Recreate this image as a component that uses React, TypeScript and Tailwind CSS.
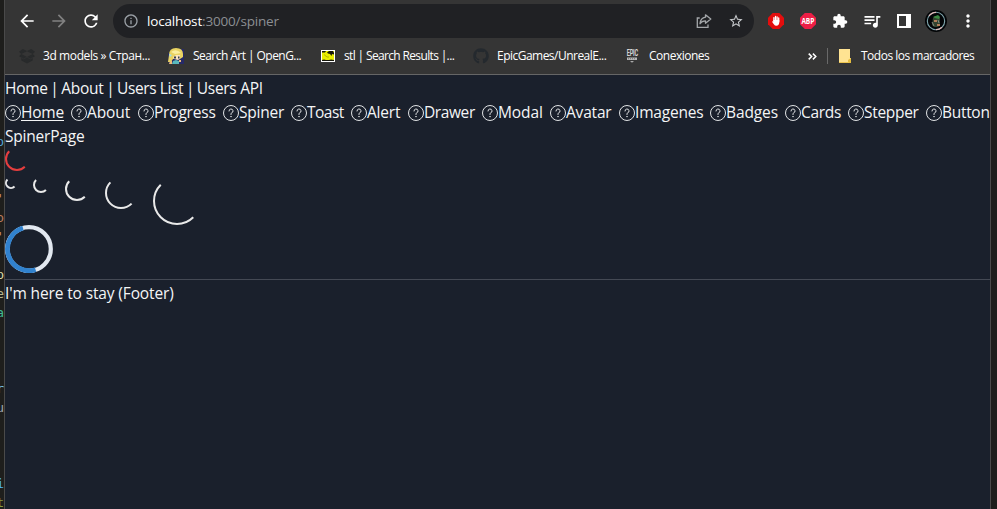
import React from "react";
import { MdArrowBack, MdArrowForward, MdRefresh, MdInfoOutline, MdStarBorder, MdExtension, MdQueueMusic, MdMoreVert } from "react-icons/md";
import { FaGithub } from "react-icons/fa";

const editorLines = [
  { ch: "p", c: "text-[#4fa3d8]" }, { ch: "", c: "" }, { ch: "", c: "" }, { ch: "'", c: "text-[#ce9178]" },
  { ch: "o", c: "text-[#b87a5f]" }, { ch: "'", c: "text-[#ce9178]" }, { ch: "", c: "" }, { ch: "p", c: "text-[#dcdcaa]" },
  { ch: "e", c: "text-[#b5b58e]" }, { ch: "a", c: "text-[#3fb894]" }, { ch: "", c: "" }, { ch: "", c: "" },
  { ch: "", c: "" }, { ch: "r", c: "text-[#7cc4ee]" }, { ch: "u", c: "text-[#9aa5ae]" }, { ch: "", c: "" },
  { ch: "", c: "" }, { ch: "", c: "" }, { ch: "i", c: "text-[#4fb4f8]" }, { ch: "t", c: "text-[#8a9a3e]" },
];

const navItems = [
  { label: "Home", w: "w-[66px]", t: "tracking-[-0.2px]", active: true },
  { label: "About", w: "w-[67px]", t: "tracking-[-0.1px]" },
  { label: "Progress", w: "w-[85px]", t: "tracking-[-0.2px]" },
  { label: "Spiner", w: "w-[68px]", t: "tracking-[-0.2px]" },
  { label: "Toast", w: "w-[60px]", t: "tracking-[-0.5px]" },
  { label: "Alert", w: "w-[57px]", t: "tracking-[-0.2px]" },
  { label: "Drawer", w: "w-[74px]", t: "tracking-[-0.4px]" },
  { label: "Modal", w: "w-[68px]", t: "tracking-[-0.1px]" },
  { label: "Avatar", w: "w-[69px]", t: "tracking-[-0.2px]" },
  { label: "Imagenes", w: "w-[91px]", t: "tracking-[-0.2px]" },
  { label: "Badges", w: "w-[75px]", t: "tracking-[-0.1px]" },
  { label: "Cards", w: "w-[63px]", t: "tracking-[-0.3px]" },
  { label: "Stepper", w: "w-[78px]", t: "tracking-[-0.3px]" },
  { label: "Button", w: "w-[64px]", t: "tracking-[-0.3px]" },
];

function QuestionIcon() {
  return (
    <svg viewBox="0 0 24 24" className="mt-[6px] size-4 shrink-0 text-[#e2e4e6]">
      <g stroke="currentColor" strokeWidth="1.5">
        <path strokeLinecap="round" fill="none" d="M9,9a3,3,0,1,1,4,2.829,1.5,1.5,0,0,0-1,1.415V14.25" />
        <path fill="currentColor" strokeLinecap="round" d="M12,17.25a.375.375,0,1,0,.375.375A.375.375,0,0,0,12,17.25h0" />
        <circle fill="none" strokeMiterlimit="10" cx="12" cy="12" r="11.25" />
      </g>
    </svg>
  );
}

function Spinner({ size, className }: { size: number; className: string }) {
  const c = size / 2;
  const r = c - 1;
  const k = r * Math.SQRT1_2;
  return (
    <svg width={size} height={size} viewBox={`0 0 ${size} ${size}`} className={"block shrink-0 " + className}>
      <path d={`M${c - k} ${c - k}A${r} ${r} 0 0 0 ${c + k} ${c + k}`} fill="none" stroke="currentColor" strokeWidth="2" />
    </svg>
  );
}

function ShareIcon() {
  return (
    <svg viewBox="0 0 16 16" className="size-4" fill="none" stroke="#a4a7aa" strokeWidth="1.3">
      <path d="M3.7 5H1.3V14.3H12V11.5" />
      <path d="M9.5 1.8L14.8 6L9.5 10.2V7.8C7 7.8 5.2 8.7 4 10.8C4.3 7.2 6.2 4.7 9.5 4.2Z" strokeLinejoin="round" />
    </svg>
  );
}

function AdBlockIcon() {
  return (
    <svg viewBox="0 0 16 16" className="size-4">
      <path d="M4.7 0H11.3L16 4.7V11.3L11.3 16H4.7L0 11.3V4.7Z" fill="#e40d0d" />
      <path d="M5.9 8V4.6M7.5 7.5V3.4M9.1 7.5V3.8M10.7 8.5V5" stroke="#fff" strokeWidth="1.3" strokeLinecap="round" />
      <path d="M5.3 7H11.3V9.8Q10.9 12.8 8.4 12.8Q6.8 12.8 5.8 11.2L4 8.8Q4.4 7.9 5.3 8.7Z" fill="#fff" />
    </svg>
  );
}

function AbpIcon() {
  return (
    <span className="flex size-4 items-center justify-center bg-[#ed1e45] text-white [clip-path:polygon(30%_0,70%_0,100%_30%,100%_70%,70%_100%,30%_100%,0_70%,0_30%)]">
      <span className="scale-x-[0.82] font-['Open_Sans',sans-serif] text-[8px] leading-none font-bold tracking-[-0.1px]">ABP</span>
    </span>
  );
}

function AvatarIcon() {
  return (
    <svg viewBox="0 0 22 22" className="size-[22px]">
      <circle cx="11" cy="11" r="11" fill="#030507" />
      <circle cx="11" cy="11" r="8.7" fill="none" stroke="#7fa6ad" strokeWidth="1.1" />
      <path d="M4 6A8.7 8.7 0 0 1 11 2.3M17 17.3A8.7 8.7 0 0 1 11 19.7" fill="none" stroke="#e1b9b8" strokeWidth="1.2" />
      <path d="M7 15L8 8L10 6H14L15 9V15L13 17H9Z" fill="#33432f" />
      <path d="M8 7L13 5L15 7L14 9L10 8Z" fill="#3c8b42" />
      <path d="M9 10H12V12H9ZM12 14H15V16H12Z" fill="#b27d59" />
      <path d="M7 12L9 16M13 10L14 13" stroke="#9aa49a" strokeWidth=".8" />
    </svg>
  );
}

function BoxIcon() {
  return (
    <svg viewBox="0 0 16 16" className="size-4" fill="#282a2b">
      <path d="M3.8 1L8 3L12.2 1L16 3.7L13.7 6L16 8.3L13.7 9.6V12.4L8 15.5L2.3 12.4V9.6L0 8.3L2.3 6L0 3.7Z" />
      <path d="M2.3 6L8 3.2L13.7 6L8 8.9Z" fill="#353535" />
      <path d="M2.3 9.7L4.8 11L8 9L11.2 11L13.7 9.7" stroke="#353535" strokeWidth=".6" fill="none" />
    </svg>
  );
}

function GirlIcon() {
  return (
    <svg viewBox="0 0 16 16" className="size-4">
      <path d="M0 5H5V1H16V16H1Z" fill="#262a67" />
      <path d="M1 7Q1 0 8 0Q15 0 15 6V9L12 11H5L3 14H0Z" fill="#e9d362" />
      <path d="M3 4Q8 0 13 5L7 6Z" fill="#fbefa0" />
      <path d="M5 9L8 7L12 7V11L10 12L6 11Z" fill="#fae3c0" />
      <path d="M6 8.5H8V10.5H6ZM10 8.5H11.5V10.5H10Z" fill="#34404a" />
      <path d="M1 6L4 7L2 9Z" fill="#9de4ed" />
      <path d="M5 13L8 12L11 13V16H4Z" fill="#5ab9bd" />
      <path d="M2 13H4V16H1ZM11 12H13V14H11Z" fill="#efbc7c" />
    </svg>
  );
}

function StlIcon() {
  return (
    <svg viewBox="0 0 14 12" className="h-3 w-[14px]">
      <path d="M0 0H14V12H0Z" fill="#fff" />
      <path d="M1 1H13V11H1Z" fill="#e8ed00" />
      <path d="M1 1H5L4 2.5H1ZM6 2.5L8 1H12L13 3V4.5L11 4L10.5 6L9 4L7 3.5ZM1 10L3 9.5L5 10H8L10 9.5L13 10V11H1Z" fill="#16170a" />
      <path d="M3 4.5L6 7H8" stroke="#a3a800" strokeWidth=".8" fill="none" />
    </svg>
  );
}

function EpicIcon() {
  return (
    <span className="flex w-[10px] flex-col items-center">
      <span className="scale-x-[0.66] font-['Roboto',sans-serif] text-[8.5px] leading-[7px] font-bold tracking-[-0.4px] text-[#d5d5d5]">EPIC</span>
      <svg viewBox="0 0 10 6" className="h-[6px] w-[10px]">
        <path d="M0 .5H10V3H0Z" fill="#b8b8b8" />
        <path d="M1 1.7H9" stroke="#555" strokeWidth=".7" strokeDasharray="1 1" />
        <path d="M3 4H7L5 5.7Z" fill="#aaa" />
      </svg>
    </span>
  );
}

function Bookmark({ icon, label, className, iconBox }: { icon: React.ReactNode; label: string; className: string; iconBox: string }) {
  return (
    <div className={"flex h-full shrink-0 items-center whitespace-nowrap " + className}>
      <span className={"flex shrink-0 items-center " + iconBox}>{icon}</span>
      <span>{label}</span>
    </div>
  );
}

function Divider() {
  return <span className="mx-[-1px]"> | </span>;
}

export default function App() {
  return (
    <div className="flex h-[509px] w-[997px] overflow-hidden bg-[#1e1e1c] font-['Open_Sans','Noto_Sans',sans-serif] text-white">
      <aside className="w-1 shrink-0 overflow-hidden pt-[132px] font-['DejaVu_Sans_Mono',monospace] text-[13px]">
        {editorLines.map((l, i) => (
          <div key={i} className={"flex h-[19px] items-center justify-end leading-[19px] " + l.c}>{l.ch}</div>
        ))}
      </aside>
      <div className="flex w-[987px] shrink-0 flex-col border-x border-[#4a4a4a] bg-[#1a202c]">
        <header className="h-[75px] shrink-0 border-b border-[#666666] bg-[#353535]">
          <div className="flex h-[38px] items-end">
            <div className="flex h-[34px] w-[108px] shrink-0 items-center gap-3 pl-3">
              <MdArrowBack className="size-5" />
              <MdArrowForward className="size-5 text-[#818181]" />
              <MdRefresh className="size-5" />
            </div>
            <div className="flex h-[34px] w-[641px] shrink-0 items-center rounded-full bg-[#202124] pl-[10px]">
              <MdInfoOutline className="size-4 text-[#9aa0a6]" />
              <span className="ml-2 flex-1 text-[13.5px] leading-5 tracking-[-0.17px] text-[#8c8f93]">
                <span className="text-white">localhost</span>:3000/spiner
              </span>
              <ShareIcon />
              <MdStarBorder className="mr-[10px] ml-4 size-4 text-[#c7cacd]" />
            </div>
            <div className="flex h-[34px] items-center pl-[14px]">
              <AdBlockIcon />
              <span className="ml-4"><AbpIcon /></span>
              <MdExtension className="ml-4 size-4" />
              <MdQueueMusic className="ml-[14px] size-5" />
              <span className="ml-[15px] h-[14px] w-[14px] border-2 border-r-[5px] border-white" />
              <span className="ml-[14px]"><AvatarIcon /></span>
              <MdMoreVert className="ml-[11px] size-5" />
            </div>
          </div>
          <div className="flex h-9 items-center text-[12px] leading-4 font-medium">
            <Bookmark className="ml-[14px] w-[149px] tracking-[-0.4px]" iconBox="w-6" icon={<BoxIcon />} label="3d models » Стран..." />
            <Bookmark className="w-[153px] tracking-[-0.55px]" iconBox="w-[25px]" icon={<GirlIcon />} label="Search Art | OpenG..." />
            <Bookmark className="w-[152px] tracking-[-0.65px]" iconBox="w-[23px]" icon={<StlIcon />} label="stl | Search Results |..." />
            <Bookmark className="w-[154px] tracking-[-0.52px]" iconBox="w-6" icon={<FaGithub className="size-4 text-[#24292e]" />} label="EpicGames/UnrealE..." />
            <Bookmark className="w-[181px] tracking-[-0.5px]" iconBox="w-[22px]" icon={<EpicIcon />} label="Conexiones" />
            <span className="flex w-[19px] items-center">
              <svg viewBox="0 0 9 7" className="h-[7px] w-[9px]" fill="none" stroke="#fff" strokeWidth="1.5">
                <path d="M.7 .6L3.6 3.5L.7 6.4M4.9 .6L7.8 3.5L4.9 6.4" />
              </svg>
            </span>
            <span className="h-4 w-px bg-[#696969]" />
            <span className="ml-[11px] w-[22px]">
              <svg viewBox="0 0 12 14" className="h-[14px] w-3">
                <path d="M0 0H11V9H12V14H0Z" fill="#ffe392" />
                <path d="M9 14V11L12 9V14Z" fill="#e6bd3e" />
                <path d="M0 13.5H10" stroke="#edc550" />
              </svg>
            </span>
            <span className="tracking-[-0.5px] whitespace-nowrap">Todos los marcadores</span>
          </div>
        </header>
        <main className="flex-1 overflow-hidden text-[15.5px] leading-[26px] text-[#f4f5f6]">
          <div className="h-6 tracking-[-0.3px] whitespace-pre">
            Home<Divider />About<Divider /><span className="tracking-[-0.4px]">Users List</span><Divider /><span className="tracking-[-0.3px]">Users API</span>
          </div>
          <nav className="flex h-6">
            {navItems.map((n) => (
              <div key={n.label} className={"flex shrink-0 whitespace-nowrap " + n.w}>
                <QuestionIcon />
                <span className={n.t + (n.active ? " underline underline-offset-2" : "")}>{n.label}</span>
              </div>
            ))}
          </nav>
          <div className="h-6 tracking-[-0.2px]">SpinerPage</div>
          <div className="h-[30px]"><Spinner size={24} className="text-[#e53e3e]" /></div>
          <div className="flex h-12 items-start gap-4 text-[#e9e9e9]">
            <Spinner size={12} className="" />
            <Spinner size={16} className="" />
            <Spinner size={24} className="" />
            <Spinner size={32} className="" />
            <Spinner size={48} className="" />
          </div>
          <div className="h-[54px]">
            <svg viewBox="0 0 48 48" className="block size-12" fill="none" strokeWidth="4.2">
              <circle cx="24" cy="24" r="21.8" stroke="#e2e8f0" />
              <path d="M18 3.04A21.8 21.8 0 0 0 30.6 44.78" stroke="#e2e8f0" />
              <path d="M18 3.04A21.8 21.8 0 0 0 30.6 44.78" stroke="#3182ce" strokeWidth="4.8" />
            </svg>
          </div>
          <footer className="border-t border-[#444954] tracking-[-0.13px]">I'm here to stay (Footer)</footer>
        </main>
      </div>
    </div>
  );
}
